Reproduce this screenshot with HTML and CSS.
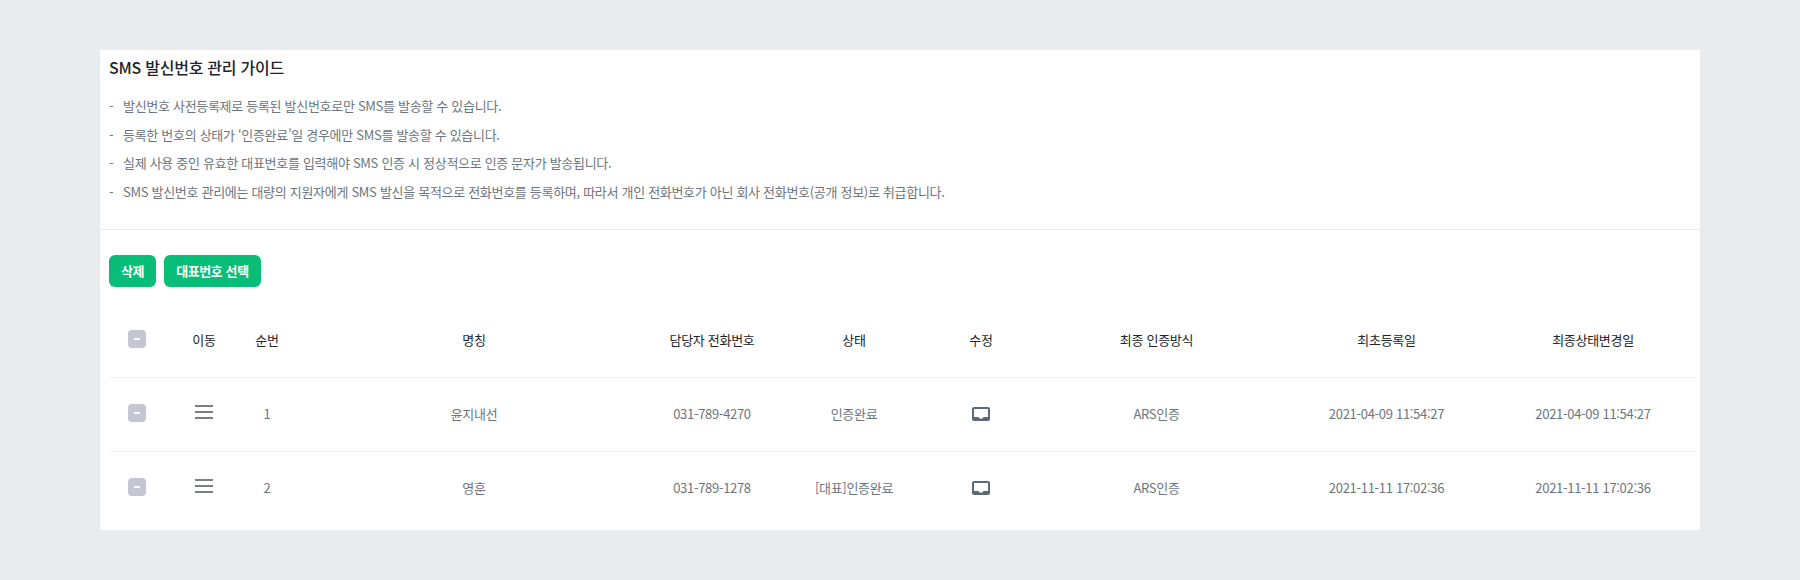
FILE: index.html
```html
<!DOCTYPE html>
<html lang="ko">
<head>
<meta charset="utf-8">
<title>SMS 발신번호 관리</title>
<link rel="stylesheet" href="styles.css">
</head>
<body>
<main class="card">
  <section class="guide">
    <h2 class="guide-title">SMS 발신번호 관리 가이드</h2>
    <ul class="guide-list">
      <li>발신번호 사전등록제로 등록된 발신번호로만 SMS를 발송할 수 있습니다.</li>
      <li>등록한 번호의 상태가 ‘인증완료’일 경우에만 SMS를 발송할 수 있습니다.</li>
      <li>실제 사용 중인 유효한 대표번호를 입력해야 SMS 인증 시 정상적으로 인증 문자가 발송됩니다.</li>
      <li>SMS 발신번호 관리에는 대량의 지원자에게 SMS 발신을 목적으로 전화번호를 등록하며, 따라서 개인 전화번호가 아닌 회사 전화번호(공개 정보)로 취급합니다.</li>
    </ul>
  </section>
  <section class="list">
    <div class="actions">
      <button class="btn" type="button">삭제</button>
      <button class="btn" type="button">대표번호 선택</button>
    </div>
    <table class="table">
      <colgroup>
        <col class="c1"><col class="c2"><col class="c3"><col class="c4"><col class="c5">
        <col class="c6"><col class="c7"><col class="c8"><col class="c9"><col class="c10">
      </colgroup>
      <thead>
        <tr>
          <th><span class="check"></span></th>
          <th>이동</th><th>순번</th><th>명칭</th><th>담당자 전화번호</th><th>상태</th><th>수정</th>
          <th>최종 인증방식</th><th>최초등록일</th><th>최종상태변경일</th>
        </tr>
      </thead>
      <tbody>
        <tr>
          <td><span class="check"></span></td>
          <td><span class="drag"></span></td>
          <td>1</td><td>윤지내선</td><td>031-789-4270</td><td>인증완료</td>
          <td><svg class="inbox" viewBox="0 0 18 14"><path fill-rule="evenodd" d="M2 0h14a2 2 0 0 1 2 2v10a2 2 0 0 1-2 2H2a2 2 0 0 1-2-2V2a2 2 0 0 1 2-2zm0 2v8h4.5l1 1.5h3l1-1.5H16V2z"/></svg></td>
          <td>ARS인증</td><td>2021-04-09 11:54:27</td><td>2021-04-09 11:54:27</td>
        </tr>
        <tr>
          <td><span class="check"></span></td>
          <td><span class="drag"></span></td>
          <td>2</td><td>영훈</td><td>031-789-1278</td><td>[대표]인증완료</td>
          <td><svg class="inbox" viewBox="0 0 18 14"><path fill-rule="evenodd" d="M2 0h14a2 2 0 0 1 2 2v10a2 2 0 0 1-2 2H2a2 2 0 0 1-2-2V2a2 2 0 0 1 2-2zm0 2v8h4.5l1 1.5h3l1-1.5H16V2z"/></svg></td>
          <td>ARS인증</td><td>2021-11-11 17:02:36</td><td>2021-11-11 17:02:36</td>
        </tr>
      </tbody>
    </table>
  </section>
</main>
</body>
</html>
```

FILE: styles.css
```css
* { box-sizing: border-box; }
html, body { margin: 0; height: 100%; }
body {
  background: #e9ecef;
  padding: 50px 100px;
  font-family: "Noto Sans CJK KR", "Noto Sans", sans-serif;
  color: #6c757d;
  letter-spacing: -0.3px;
  overflow: hidden;
}
.card { background: #fff; height: 480px; }
.guide { height: 180px; padding: 5px 9px 0; border-bottom: 1px solid #e9ecef; }
.guide-title { margin: 0; font-size: 16px; line-height: 24px; font-weight: 500; color: #212529; letter-spacing: -0.25px; }
.guide-list { list-style: none; margin: 13px 0 0; padding: 0; font-size: 13px; line-height: 28.7px; }
.guide-list li { padding-left: 14px; position: relative; }
.guide-list li::before { content: "-"; position: absolute; left: 0; }
.list { padding: 25px 4px 0 9px; }
.actions { display: flex; gap: 8px; height: 32px; }
.btn {
  border: 0; border-radius: 6px; background: #08bd77; color: #fff;
  font: 700 13px/32px "Noto Sans CJK KR", sans-serif; letter-spacing: -0.4px; padding: 0 12px;
}
.table { width: 100%; margin-top: 16px; border-collapse: collapse; table-layout: fixed; font-size: 13px; }
.c1 { width: 56px; } .c2 { width: 78px; } .c3 { width: 48px; } .c4 { width: 366px; }
.c5 { width: 110px; } .c6 { width: 174px; } .c7 { width: 80px; } .c8 { width: 271px; }
.c9 { width: 189px; } .c10 { width: 215px; }
th, td { text-align: center; padding: 0; height: 74px; }
td { padding-bottom: 2px; }
th:last-child, td:last-child { padding-left: 9px; }
th { font-weight: 400; color: #212529; border-bottom: 1px solid #f1f3f5; }
tbody tr:first-child td { border-bottom: 1px solid #f1f3f5; }
.check {
  display: block; width: 18px; height: 18px; margin: 0 auto; border-radius: 4px;
  background: #c4c7d3; position: relative;
}
th .check { margin-top: -1px; }
.check::after {
  content: ""; position: absolute; left: 6px; top: 8px; width: 6px; height: 2px; background: #fff;
}
.drag {
  display: block; width: 18px; height: 14px; margin: 0 auto 2px;
  border-top: 2px solid #7b7f84; border-bottom: 2px solid #7b7f84; position: relative;
}
.drag::after { content: ""; position: absolute; left: 0; right: 0; top: 4px; height: 2px; background: #7b7f84; }
.inbox { display: block; width: 18px; height: 14px; fill: #5f6875; margin: 2px auto 0; }
```
